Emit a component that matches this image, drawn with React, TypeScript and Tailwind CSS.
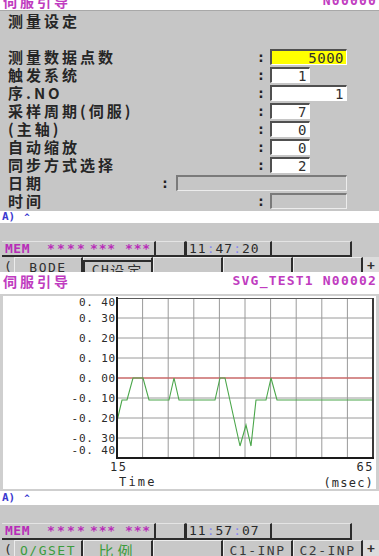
import React from "react";

type Row = { label: string; value: string; w: string; yellow?: boolean };

const rows: Row[] = [
  { label: "测量数据点数", value: "5000", w: "w-[77px]", yellow: true },
  { label: "触发系统", value: "1", w: "w-[40px]" },
  { label: "序.NO", value: "1", w: "w-[77px]" },
  { label: "采样周期(伺服)", value: "7", w: "w-[40px]" },
  { label: "(主轴)", value: "0", w: "w-[40px]" },
  { label: "自动缩放", value: "0", w: "w-[40px]" },
  { label: "同步方式选择", value: "2", w: "w-[40px]" },
];

const TitleRow = ({ right, h }: { right: string; h: string }) => (
  <div className={`flex ${h} items-center justify-between bg-white pl-[3px] pr-[2px]`}>
    <span className="font-['Noto_Sans_CJK_SC',sans-serif] text-[14px] leading-[16px] font-bold tracking-[3px] text-[#c03cc0]">
      伺服引导
    </span>
    <span className="font-['DejaVu_Sans_Mono',monospace] text-[13px] leading-[16px] font-bold tracking-[1.2px] text-[#c03cc0]">
      {right}
    </span>
  </div>
);

const ValueBox = ({ value, w, yellow }: { value: string; w: string; yellow?: boolean }) => (
  <div
    className={`${w} h-[16px] border-t-2 border-l-2 border-r border-b border-t-[#505050] border-l-[#505050] border-r-white border-b-white ${
      yellow ? "bg-[#ffff00]" : "bg-white"
    } pr-[2px] text-right font-['DejaVu_Sans_Mono',monospace] text-[14px] leading-[14px] tracking-[0.5px] text-[#303030] slashed-zero`}
  >
    {value}
  </div>
);

const GrayBox = ({ w }: { w: string }) => (
  <div className={`${w} h-[16px] border-t-2 border-l-2 border-r border-b border-t-[#7a7a7a] border-l-[#7a7a7a] border-r-[#ececec] border-b-[#ececec] bg-[#c6c6c6]`} />
);

const Colon = ({ w }: { w: string }) => (
  <span className={`${w} text-center font-['DejaVu_Sans_Mono',monospace] text-[14px] font-bold text-[#202020]`}>:</span>
);

const labelCls =
  "font-['Noto_Sans_CJK_SC',sans-serif] text-[15px] leading-[18px] font-bold tracking-[3px] text-[#262626] whitespace-nowrap";

const SettingsPanel = () => (
  <div className="h-[201px] overflow-hidden border-t border-t-[#a8a8a8] bg-[#c6c6c6] pt-[1px] pl-[8px]">
    <div className={`h-[18px] ${labelCls}`}>测量设定</div>
    <div className="h-[18px]" />
    {rows.map((r) => (
      <div key={r.label} className="flex h-[18px] items-center">
        <span className={`w-[248px] ${labelCls}`}>{r.label}</span>
        <Colon w="w-[10px]" />
        <div className="ml-[4px]">
          <ValueBox value={r.value} w={r.w} yellow={r.yellow} />
        </div>
      </div>
    ))}
    <div className="flex h-[18px] items-center">
      <span className={`w-[152px] ${labelCls}`}>日期</span>
      <Colon w="w-[10px]" />
      <div className="ml-[6px]">
        <GrayBox w="w-[171px]" />
      </div>
    </div>
    <div className="flex h-[18px] items-center">
      <span className={`w-[248px] ${labelCls}`}>时间</span>
      <Colon w="w-[10px]" />
      <div className="ml-[4px]">
        <GrayBox w="w-[77px]" />
      </div>
    </div>
  </div>
);

const Prompt = ({ h }: { h: string }) => (
  <div className={`${h} flex items-center bg-white pl-[2px] font-['DejaVu_Sans_Mono',monospace] text-[11px] leading-[12px] font-bold text-[#3a3ad0]`}>
    <span>A)</span>
    <span className="ml-[9px] text-[9px]">^</span>
  </div>
);

const cell = "h-full border-r-2 border-b-2 border-t border-r-[#2c2c2c] border-b-[#2c2c2c] border-t-[#e4e4e4] bg-[#c8c8c8]";

const StatusBar = ({ time, h }: { time: string; h: string }) => (
  <div className={`flex ${h} bg-[#c8c8c8] pl-[2px] font-['DejaVu_Sans_Mono',monospace] text-[13px] leading-[14px]`}>
    <div className={`flex w-[154px] items-center pl-[3px] font-bold text-[#b82cb8] ${cell}`}>
      <span className="w-[42px] tracking-[0.5px]">MEM</span>
      <span className="w-[43px] tracking-[2.2px]">****</span>
      <span className="w-[35px] tracking-[0.8px]">***</span>
      <span className="tracking-[0.8px]">***</span>
    </div>
    <div className={`w-[30px] ${cell}`} />
    <div className={`flex w-[86px] items-center border-l border-l-[#2c2c2c] pl-[2px] tracking-[1px] text-[#2a2a2a] slashed-zero ${cell}`}>
      {time.split(":").map((p, i) => (
        <React.Fragment key={i}>
          {i > 0 && <span className="text-[#8a8af0]">:</span>}
          <span>{p}</span>
        </React.Fragment>
      ))}
    </div>
    <div className={`w-[80px] ${cell}`} />
  </div>
);

const keyCls =
  "flex h-full justify-center pt-[2px] border-r-2 border-r-[#2c2c2c] border-t border-l border-t-[#ececec] border-l-[#ececec] bg-[#c8c8c8] whitespace-nowrap";

const KeyRow = ({ h, keys }: { h: string; keys: React.ReactNode[] }) => (
  <div className={`flex ${h} overflow-hidden bg-[#c8c8c8] pl-[4px] font-['DejaVu_Sans_Mono',monospace] text-[13px] leading-[16px]`}>
    <div className="w-[10px] pt-[2px] text-[#303030]">(</div>
    {keys.map((k, i) => (
      <div key={i} className={`${i === 0 ? "w-[69px]" : "w-[70px]"} ${keyCls}`}>
        {k}
      </div>
    ))}
    <div className="flex h-full w-[16px] justify-center bg-[#dcdcdc] pt-[1px] font-bold text-[#303030]">+</div>
  </div>
);

const Chart = () => {
  const verts = Array.from({ length: 9 }, (_, i) => 117 + 25.6 * (i + 1));
  const hors = Array.from({ length: 7 }, (_, i) => 298 + 20 * (i + 1));
  const labels: [string, number][] = [
    ["0. 40", 302.5],
    ["0. 30", 318],
    ["0. 20", 338],
    ["0. 10", 358],
    ["0. 00", 378],
    ["-0. 10", 398],
    ["-0. 20", 418],
    ["-0. 30", 438],
    ["-0. 40", 450.5],
  ];
  const pts =
    "117,421 122,400 127,400 133,378 143,378 149,400 169,400 174,378 179,400 215,400 220,378 225,378 240,446 246,425 251,446 256,400 266,400 271,378 277,400 373,400";
  return (
    <svg width="373" height="193" viewBox="3 296 373 193" className="block">
      {verts.map((x) => (
        <line key={x} x1={x} y1={298} x2={x} y2={458} stroke="#9a9a9a" strokeWidth="1" />
      ))}
      {hors.map((y) => (
        <line key={y} x1={117} y1={y} x2={373} y2={y} stroke="#9a9a9a" strokeWidth="1" />
      ))}
      <line x1={117} y1={378} x2={373} y2={378} stroke="#e05050" strokeWidth="1.2" />
      <polyline points={pts} fill="none" stroke="#4aa64a" strokeWidth="1.1" />
      <line x1={117} y1={298.5} x2={374} y2={298.5} stroke="#5a5a5a" strokeWidth="1" />
      <line x1={373} y1={298} x2={373} y2={459} stroke="#3a3a3a" strokeWidth="2" />
      <line x1={117} y1={297} x2={117} y2={459} stroke="#1a1a1a" strokeWidth="2" />
      <line x1={116} y1={458} x2={374} y2={458} stroke="#1a1a1a" strokeWidth="2" />
      <g fontFamily="'DejaVu Sans Mono', monospace" fill="#2a2a2a" style={{ fontVariantNumeric: "slashed-zero" }}>
        {labels.map(([t, y]) => (
          <text key={t} x={116} y={y} fontSize="11" letterSpacing="0.8" textAnchor="end" dominantBaseline="central">
            {t}
          </text>
        ))}
        <text x={110} y={467} fontSize="12" letterSpacing="1.5" dominantBaseline="central">15</text>
        <text x={119} y={482} fontSize="12" letterSpacing="2.2" dominantBaseline="central">Time</text>
        <text x={374} y={467} fontSize="12" letterSpacing="1.5" textAnchor="end" dominantBaseline="central">65</text>
        <text x={374} y={483} fontSize="12" letterSpacing="1.2" textAnchor="end" dominantBaseline="central">(msec)</text>
      </g>
    </svg>
  );
};

const GraphPanel = () => (
  <div className="h-[201px] bg-white pt-[4px]">
    <div className="h-[197px] border-t-2 border-l-[3px] border-r-[3px] border-b-2 border-[#cfcfcf] bg-white">
      <Chart />
    </div>
  </div>
);

export default function App() {
  return (
    <div className="h-[556px] w-[379px] overflow-hidden bg-white">
      <div className="-mt-[9px]">
        <TitleRow right="N00000" h="h-[19px]" />
        <SettingsPanel />
        <Prompt h="h-[12px]" />
        <div className="h-[18px] bg-[#c8c8c8]" />
        <StatusBar time="11:47:20" h="h-[16px]" />
        <KeyRow
          h="h-[15px]"
          keys={[
            <span className="tracking-[1.5px] text-[#303030]">BODE</span>,
            <span className="flex -ml-[1px] h-[17px] w-[71px] justify-center border-l-2 border-t-2 border-[#2c2c2c] text-[#303030]">
              <span className="tracking-[1.5px]">CH</span>
              <span className="font-['Noto_Sans_CJK_SC',sans-serif] text-[14px] tracking-[3px]">设定</span>
            </span>,
            null,
            null,
            null,
          ]}
        />
      </div>
      <div>
        <TitleRow right="SVG_TEST1 N00002" h="h-[18px]" />
        <GraphPanel />
        <Prompt h="h-[14px]" />
        <div className="h-[18px] bg-[#c8c8c8]" />
        <StatusBar time="11:57:07" h="h-[17px]" />
        <KeyRow
          h="h-[16px]"
          keys={[
            <span className="tracking-[1.5px] text-[#3c9c3c]">O/GSET</span>,
            <span className="font-['Noto_Sans_CJK_SC',sans-serif] text-[15px] tracking-[4px] text-[#3c9c3c]">比例</span>,
            null,
            <span className="tracking-[1.5px] text-[#3a3a3a]">C1-INP</span>,
            <span className="tracking-[1.5px] text-[#3a3a3a]">C2-INP</span>,
          ]}
        />
      </div>
    </div>
  );
}
